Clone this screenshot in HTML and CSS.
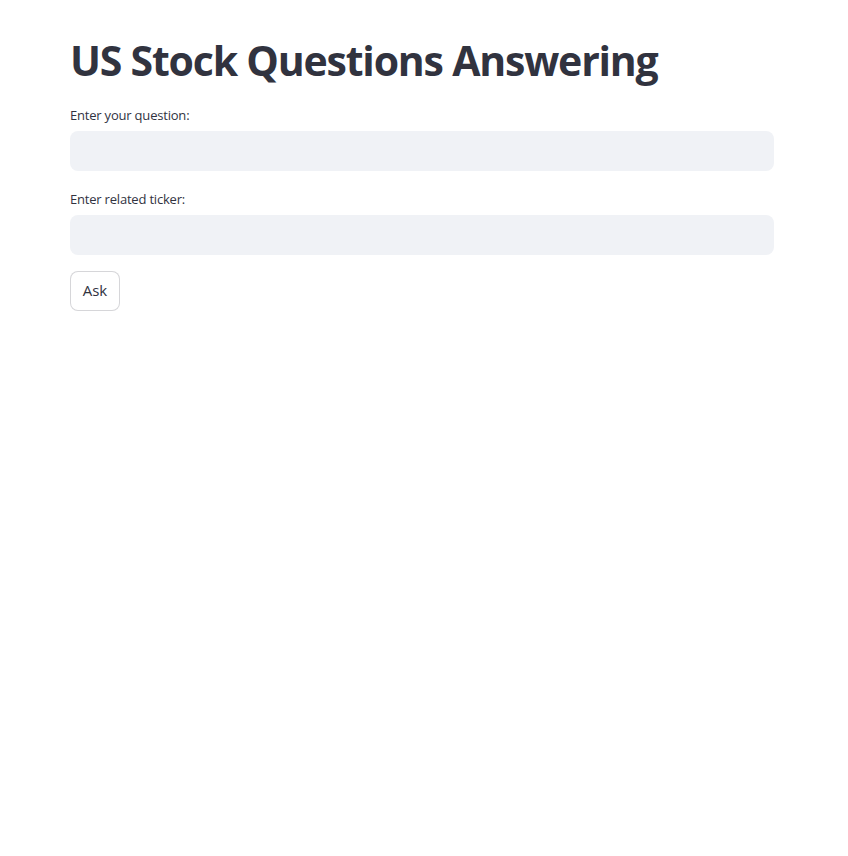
FILE: index.html
```html
<!DOCTYPE html>
<html>
<head>
<meta charset="utf-8">
<link rel="stylesheet" href="styles.css">
</head>
<body>
<main class="container">
  <h1 class="title">US Stock Questions Answering</h1>
  <div class="field">
    <label class="label">Enter your question:</label>
    <div class="input"></div>
  </div>
  <div class="field">
    <label class="label">Enter related ticker:</label>
    <div class="input"></div>
  </div>
  <div class="actions">
    <button class="btn">Ask</button>
  </div>
</main>
</body>
</html>
```
FILE: styles.css
```css
html, body {
  margin: 0;
  padding: 0;
  background: #ffffff;
}
body {
  font-family: "Open Sans", "Noto Sans", sans-serif;
  color: rgb(49, 51, 63);
  width: 848px;
  height: 856px;
}
.container {
  width: 704px;
  padding: 34px 0 0 70px;
  display: flex;
  flex-direction: column;
}
.title {
  margin: 0;
  font-size: 41px;
  font-weight: 700;
  line-height: 52px;
  letter-spacing: -1.2px;
  color: rgb(49, 51, 63);
  padding: 0 0 17px 0;
}
.field {
  display: flex;
  flex-direction: column;
  margin-bottom: 16px;
}
.label {
  font-size: 13px;
  line-height: 20px;
  letter-spacing: -0.2px;
  padding-top: 2px;
  margin-bottom: 6px;
  color: rgb(49, 51, 63);
}
.input {
  height: 40px;
  background: rgb(240, 242, 246);
  border-radius: 8px;
}
.actions {
  display: flex;
}
.btn {
  font-family: inherit;
  font-size: 15px;
  line-height: 20px;
  color: rgb(49, 51, 63);
  background: #fff;
  border: 1px solid rgba(49, 51, 63, 0.2);
  border-radius: 8px;
  height: 40px;
  width: 50px;
  padding: 0 0 2px 0;
}
```
